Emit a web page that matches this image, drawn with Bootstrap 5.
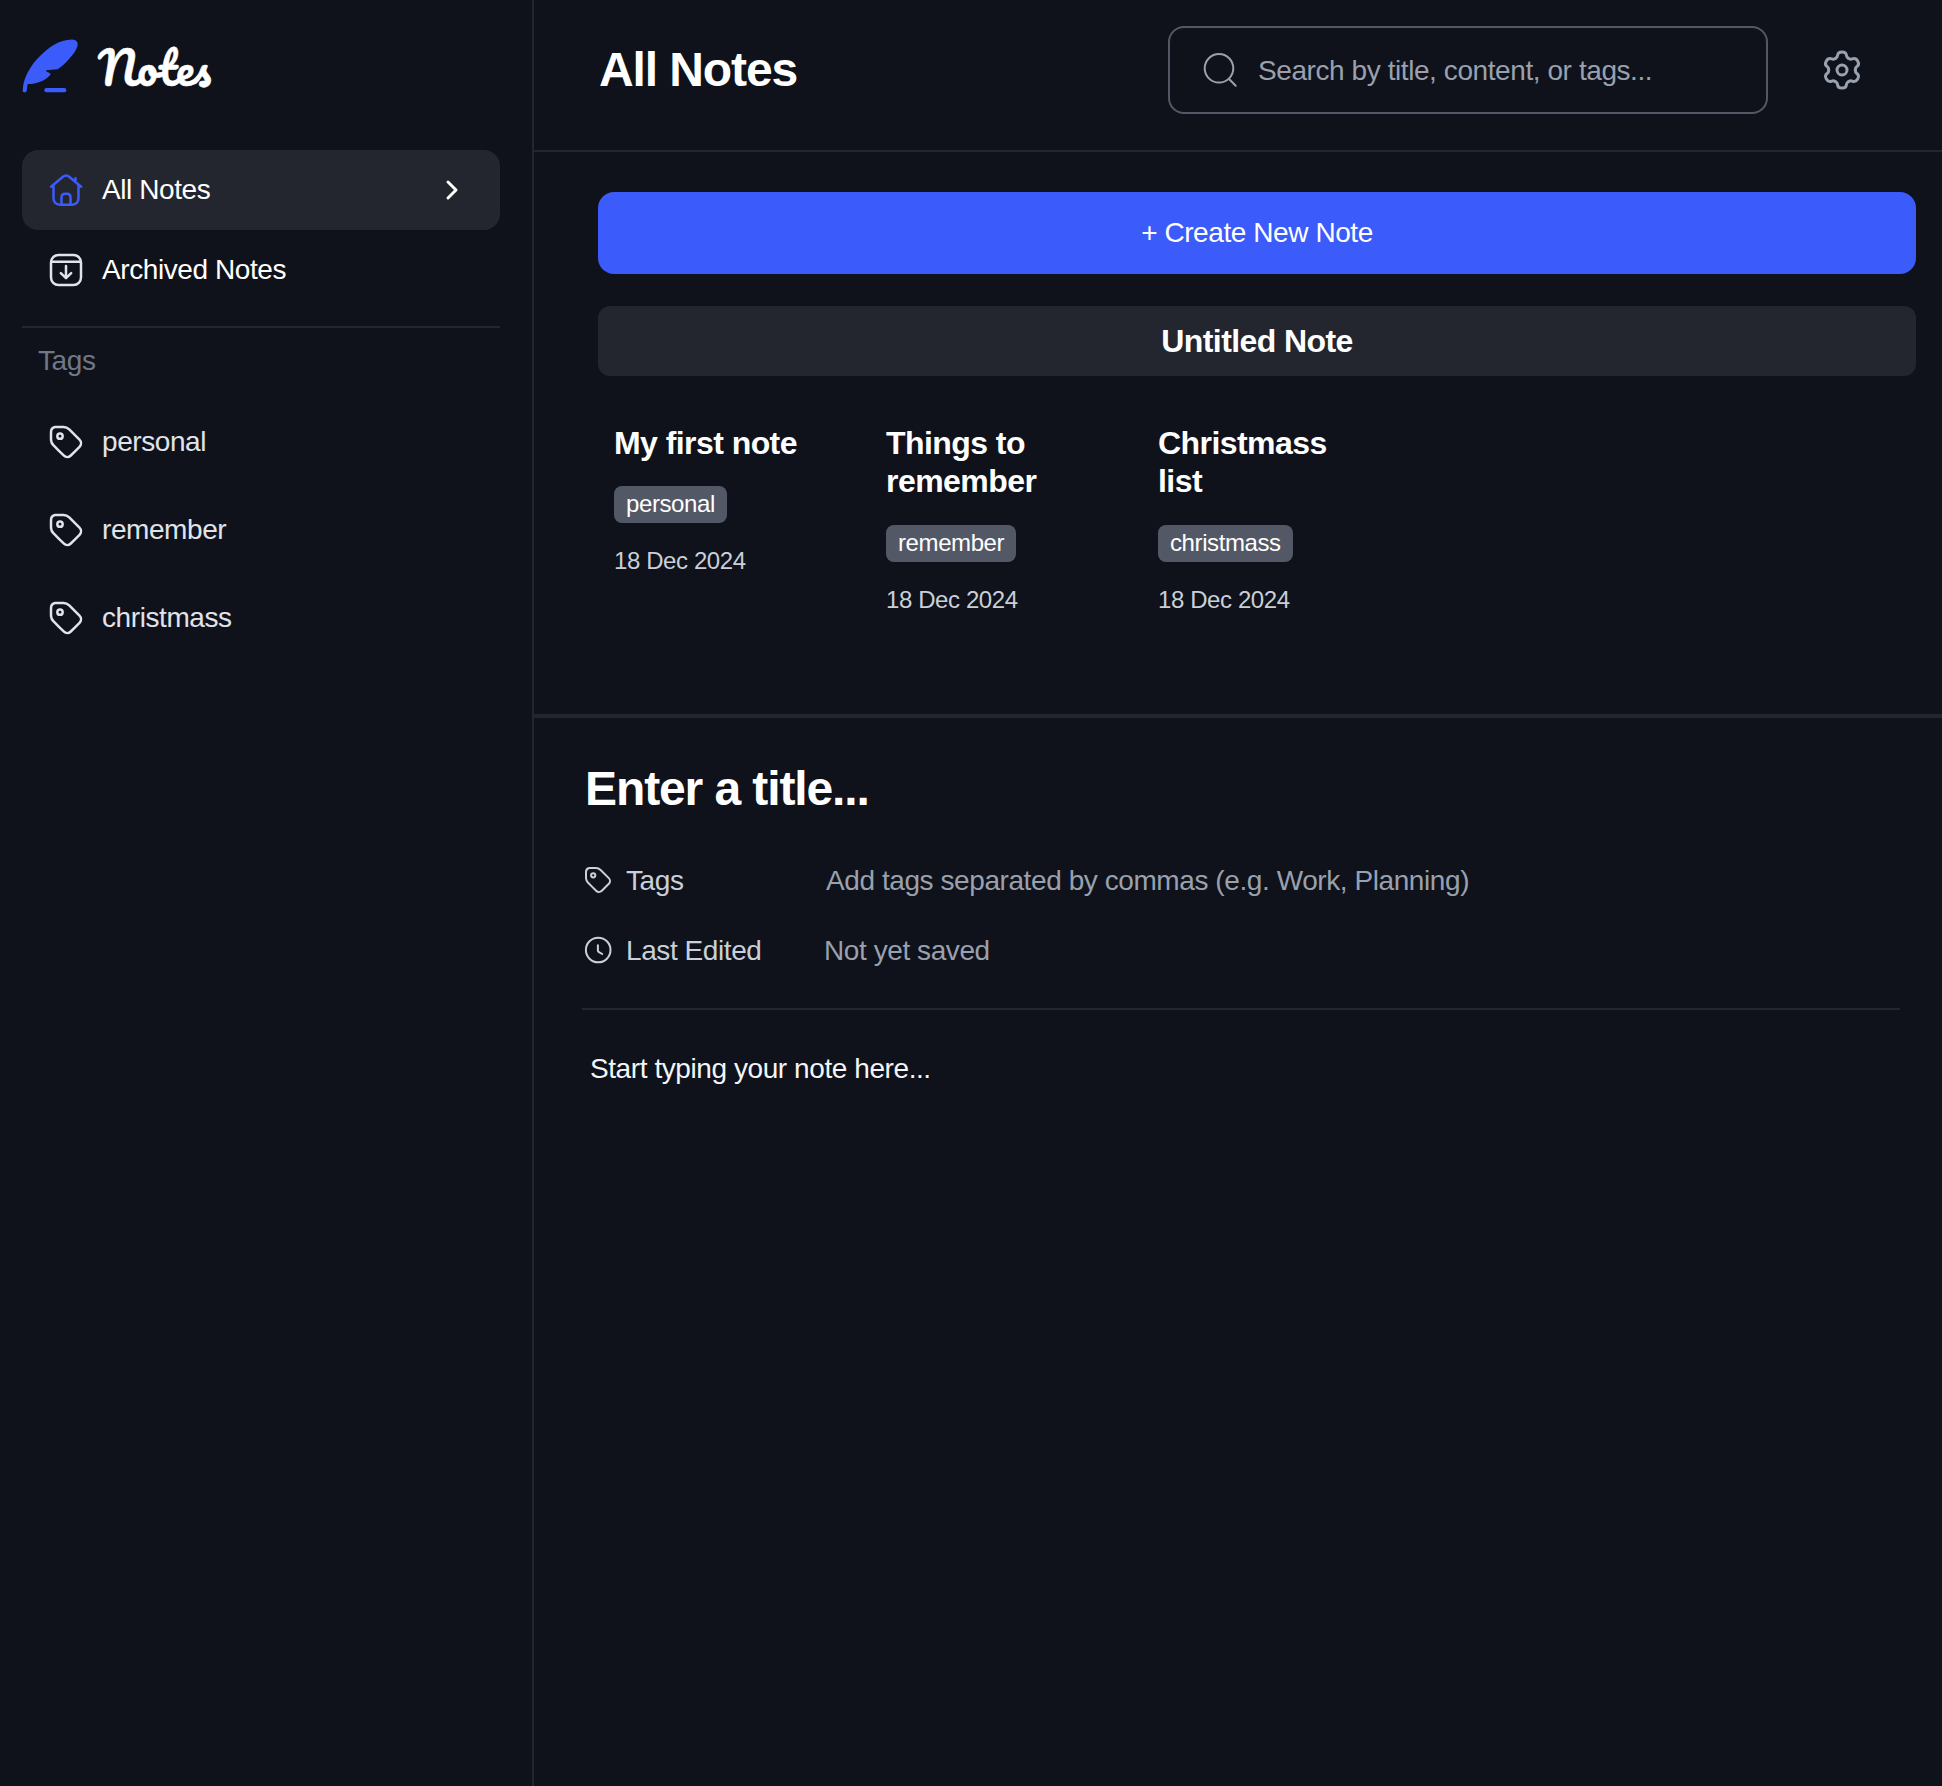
<!DOCTYPE html>
<html lang="en" data-bs-theme="dark">
<head>
<meta charset="utf-8">
<meta name="viewport" content="width=device-width, initial-scale=1">
<title>Notes</title>
<link href="https://cdn.jsdelivr.net/npm/bootstrap@5.3.0/dist/css/bootstrap.min.css" rel="stylesheet">
<style>
  body { background: #0f121a; color: #fff; font-family: "Liberation Sans", Arial, sans-serif; font-size: 28px; line-height: 40px; letter-spacing: -.42px; overflow: hidden; }
  svg { flex: none; fill: none; stroke: currentColor; stroke-width: 1.5; stroke-linecap: round; stroke-linejoin: round; display: block; }
  .ico { width: 40px; height: 40px; }
  .ico-s { width: 32px; height: 32px; }
  .ico-home { color: #3b5bfa; }
  .ico-archive { color: #e0e4ea; }
  .ico-chevron { stroke-width: 3; }
  .ico-thin { stroke-width: 2; }
  .sidebar { width: 534px; padding: 0 32px 0 22px; border-right: 2px solid #24262f; }
  .brand { height: 150px; padding-top: 38px; }
  .brand-word { font-family: Pacifico, Lato, cursive; font-weight: 400; font-size: 44.500px; line-height: 58px; letter-spacing: 0; margin-left: 18px; -webkit-text-stroke: .5px #fff; }
  .side-item { height: 80px; padding: 0 28px 0 24px; border-radius: 16px; color: #fff; gap: 16px; line-height: 38px; }
  .side-item.active { background: #24262f; }
  .side-tag { height: 88px; padding-left: 24px; gap: 16px; color: #e0e4ea; line-height: 38px; }
  .rule { height: 2px; background: #24262f; }
  .tags-head { color: #717784; padding: 13px 0 0 16px; height: 70px; }
  .topbar { height: 152px; border-bottom: 2px solid #24262f; padding: 26px 78px 0 65px; }
  h1, h2, h3 { margin: 0; font-weight: 700; }
  h1, .editor-title { font-size: 48px; letter-spacing: -1.1px; line-height: 87px; }
  .searchbox { width: 600px; height: 88px; border: 2px solid #525866; border-radius: 16px; color: #99a0ae; padding-left: 30px; gap: 18px; }
  .searchbox span { padding-top: 2px; }
  .gear-wrap { height: 88px; }
  .gear { width: 44px; height: 44px; margin-left: 52px; margin-top: -1px; color: #99a0ae; stroke-width: 3; }
  .notes { height: 566px; border-bottom: 4px solid #24262f; padding: 40px 26px 0 64px; }
  .btn-create, .btn-create:hover { height: 82px; border: 0; border-radius: 16px; font-size: 28px; letter-spacing: -.42px; background: #3b5bfa; color: #fff; }
  .draft { height: 70px; margin-top: 32px; border-radius: 12px; background: #24262f; font-size: 32px; line-height: 70px; letter-spacing: -.6px; }
  .note-grid { padding: 48px 0 0 16px; }
  .note-item { width: 272px; }
  .note-item h3 { width: 200px; font-size: 32px; line-height: 38.400px; letter-spacing: -.56px; }
  .tag-chip { display: block; width: max-content; margin-top: 23.900px; height: 37px; line-height: 36px; padding: 0 12px; border-radius: 8px; background: #525866; font-size: 24px; letter-spacing: -.4px; }
  .note-date { margin-top: 18px; color: #cacfd8; font-size: 24px; line-height: 40px; letter-spacing: -.4px; }
  .editor { padding: 27px 42px 0 48px; }
  .editor-title { padding-left: 3px; }
  .meta-row { color: #cacfd8; height: 40px; }
  .meta-row span { padding-top: 1px; }
  .row-tags { margin-top: 28px; }
  .row-edited { margin-top: 30px; }
  .meta-key { width: 242px; gap: 12px; }
  .tags-field { padding-left: 2px; }
  .dim { color: #99a0ae; }
  .rule-editor { margin-top: 38px; }
  .note-body { padding: 39px 0 0 8px; color: #f3f5f8; }
</style>
<script src="https://cdn.jsdelivr.net/npm/bootstrap@5.3.0/dist/js/bootstrap.bundle.min.js"></script>
</head>
<body>
<svg width="0" height="0" class="position-absolute" aria-hidden="true">
  <symbol id="tag" viewBox="0 0 24 24">
    <path d="M3.016 5.966c.003-1.411 1.07-2.677 2.456-2.916.284-.05 3.616-.042 4.995-.041 1.364 0 2.527.491 3.49 1.452 2.045 2.042 4.088 4.085 6.128 6.13 1.208 1.21 1.224 3.066.022 4.28a805.496 805.496 0 0 1-5.229 5.228c-1.212 1.201-3.069 1.186-4.279-.022-2.064-2.058-4.127-4.115-6.182-6.182-.795-.8-1.264-1.766-1.368-2.895-.084-.903-.035-4.26-.033-5.034Z"/>
    <circle cx="8.4" cy="8.5" r="1.6"/>
  </symbol>
</svg>
<div class="d-flex vh-100">
  <aside class="sidebar flex-shrink-0">
    <div class="brand d-flex align-items-start">
      <svg width="58" height="56" viewBox="22 38 58 56">
        <path fill="#3b5bfa" stroke="none" d="M22.7 90.4C23 84 24.600 78.500 27.300 73.300C31 66 35 60.700 41 55C48 48 59 39.400 72 39.400C76.500 39.400 78.500 42.500 77.500 46C76 51 73 54.500 69 59C66 62.500 62 66.500 57.500 69.300L46.500 70.200C45.600 70.400 45.900 71.200 46.500 71.500L49.600 73C50.700 73.600 50.700 74.600 49.800 75.400C44 81 37 83.800 27.700 84L26.800 90.400C26.300 92.900 22.600 92.900 22.700 90.400Z"/>
        <rect x="44.300" y="88" width="22" height="4.300" rx="2" fill="#3b5bfa" stroke="none"/>
      </svg>
      <span class="brand-word">Notes</span>
    </div>
    <nav>
      <a class="side-item active d-flex align-items-center text-decoration-none">
        <svg class="ico ico-home" viewBox="0 0 24 24"><path d="M3 10 10.200 4.100c1.100-.9 2.600-.9 3.700 0L21.100 10M4.500 8.900v8.100c0 2.300 1.500 3.800 3.800 3.800h7.400c2.300 0 3.800-1.500 3.800-3.800V8.900M17.700 4.900v2.300M9.300 20.700v-4.100c0-1.500.9-2.300 2.200-2.300h1c1.300 0 2.200.8 2.200 2.300v4.100"/></svg>
        <span>All Notes</span>
        <svg class="ico ico-chevron ms-auto" viewBox="0 0 40 40"><path d="m16 12 8 8-8 8"/></svg>
      </a>
      <a class="side-item d-flex align-items-center text-decoration-none">
        <svg class="ico ico-archive" viewBox="0 0 24 24"><rect x="3" y="3" width="18" height="18" rx="4.500"/><path d="M3.300 7.100h17.400M12 9.600v7M8.900 13.900l3.100 3 3.100-3"/></svg>
        <span>Archived Notes</span>
      </a>
    </nav>
    <div class="rule mt-3"></div>
    <div class="tags-head">Tags</div>
    <div class="side-tag d-flex align-items-center"><svg class="ico"><use href="#tag"/></svg><span>personal</span></div>
    <div class="side-tag d-flex align-items-center"><svg class="ico"><use href="#tag"/></svg><span>remember</span></div>
    <div class="side-tag d-flex align-items-center"><svg class="ico"><use href="#tag"/></svg><span>christmass</span></div>
  </aside>
  <main class="flex-grow-1">
    <header class="topbar d-flex align-items-start">
      <h1>All Notes</h1>
      <div class="searchbox d-flex align-items-center ms-auto">
        <svg class="ico ico-thin" viewBox="0 0 40 40"><circle cx="19" cy="18.300" r="14.300"/><path d="m29.300 29.300 6.400 6.500"/></svg>
        <span>Search by title, content, or tags...</span>
      </div>
      <div class="gear-wrap d-flex align-items-center">
        <svg class="gear" viewBox="-22 -22 44 44">
          <defs><path id="lobe" d="M-6.650-11.500C-4.900-12.500-4.600-13-4.500-14.300C-4.300-16.800-2.500-18.100 0-18.100S4.300-16.800 4.500-14.300C4.600-13 4.900-12.500 6.650-11.500"/></defs>
          <use href="#lobe"/><use href="#lobe" transform="rotate(60)"/><use href="#lobe" transform="rotate(120)"/><use href="#lobe" transform="rotate(180)"/><use href="#lobe" transform="rotate(240)"/><use href="#lobe" transform="rotate(300)"/>
          <circle r="5"/>
        </svg>
      </div>
    </header>
    <section class="notes">
      <button class="btn btn-create w-100">+ Create New Note</button>
      <h2 class="draft text-center">Untitled Note</h2>
      <div class="note-grid d-flex">
        <article class="note-item"><h3>My first note</h3><span class="tag-chip">personal</span><div class="note-date">18 Dec 2024</div></article>
        <article class="note-item"><h3>Things to remember</h3><span class="tag-chip">remember</span><div class="note-date">18 Dec 2024</div></article>
        <article class="note-item"><h3>Christmass<br>list</h3><span class="tag-chip">christmass</span><div class="note-date">18 Dec 2024</div></article>
      </div>
    </section>
    <section class="editor">
      <h2 class="editor-title">Enter a title...</h2>
      <div class="meta-row row-tags d-flex align-items-center">
        <div class="meta-key d-flex align-items-center"><svg class="ico-s"><use href="#tag"/></svg><span>Tags</span></div>
        <span class="dim tags-field">Add tags separated by commas (e.g. Work, Planning)</span>
      </div>
      <div class="meta-row row-edited d-flex align-items-center">
        <div class="meta-key d-flex align-items-center"><svg class="ico-s ico-thin" viewBox="0 0 32 32"><circle cx="16.200" cy="16" r="12.300"/><path d="M15.900 11.300v5.200c0 .6.200 1 .700 1.300l3.600 2.200"/></svg><span>Last Edited</span></div>
        <span class="dim">Not yet saved</span>
      </div>
      <div class="rule rule-editor"></div>
      <div class="note-body">Start typing your note here...</div>
    </section>
  </main>
</div>
</body>
</html>
